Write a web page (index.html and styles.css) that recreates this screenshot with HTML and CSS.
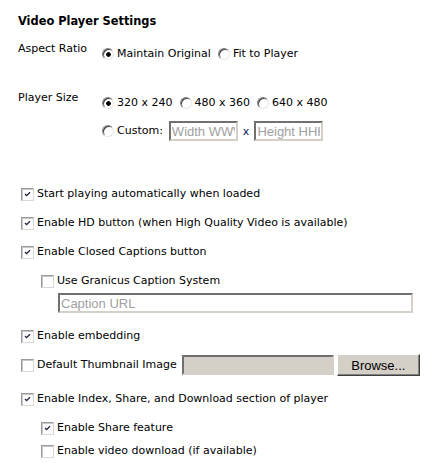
FILE: index.html
```html
<!DOCTYPE html>
<html>
<head>
<meta charset="utf-8">
<link rel="stylesheet" href="styles.css">
</head>
<body>
<div class="panel">
  <h2 class="title">Video Player Settings</h2>

  <div class="setting aspect">
    <div class="setting-label">Aspect Ratio</div>
    <div class="setting-options">
      <div class="opt-line">
        <label class="opt"><input type="radio" name="ar" checked><span>Maintain Original</span></label>
        <label class="opt"><input type="radio" name="ar"><span>Fit to Player</span></label>
      </div>
    </div>
  </div>

  <div class="setting size">
    <div class="setting-label">Player Size</div>
    <div class="setting-options">
      <div class="opt-line">
        <label class="opt"><input type="radio" name="ps" checked><span>320 x 240</span></label>
        <label class="opt"><input type="radio" name="ps"><span>480 x 360</span></label>
        <label class="opt"><input type="radio" name="ps"><span>640 x 480</span></label>
      </div>
      <div class="opt-line custom">
        <label class="opt"><input type="radio" name="ps"><span>Custom:</span></label>
        <input class="text-in small" type="text" placeholder="Width WWWW">
        <span class="times">x</span>
        <input class="text-in small" type="text" placeholder="Height HHHH">
      </div>
    </div>
  </div>

  <div class="checks">
    <label class="check"><input type="checkbox" checked><span>Start playing automatically when loaded</span></label>
    <label class="check gap"><input type="checkbox" checked><span>Enable HD button (when High Quality Video is available)</span></label>
    <label class="check gap"><input type="checkbox" checked><span>Enable Closed Captions button</span></label>
    <label class="check gap nested"><input type="checkbox"><span>Use Granicus Caption System</span></label>
    <input class="text-in caption" type="text" placeholder="Caption URL">
    <label class="check after-input"><input type="checkbox" checked><span>Enable embedding</span></label>
    <div class="check thumb-row">
      <label class="check-inline"><input type="checkbox"><span>Default Thumbnail Image</span></label>
      <input class="text-in file-box" type="text" disabled>
      <button class="browse" type="button">Browse...</button>
    </div>
    <label class="check after-thumb"><input type="checkbox" checked><span>Enable Index, Share, and Download section of player</span></label>
    <label class="check gap nested"><input type="checkbox" checked><span>Enable Share feature</span></label>
    <label class="check small-gap nested"><input type="checkbox"><span>Enable video download (if available)</span></label>
  </div>
</div>
</body>
</html>
```

FILE: styles.css
```css
html, body {
  margin: 0;
  padding: 0;
  background: #ffffff;
}

body {
  font-family: "DejaVu Sans", Verdana, sans-serif;
  font-size: 11px;
  color: #000;
}

.panel {
  padding: 13px 0 0 18px;
}

.title {
  margin: 0;
  font-size: 11.4px;
  font-weight: bold;
  line-height: 16px;
}

.setting {
  display: flex;
  align-items: flex-start;
}

.aspect {
  margin-top: 12px;
}

.size {
  margin-top: 28px;
}

.setting-label {
  width: 84px;
  line-height: 16px;
}

.setting-options {
  display: flex;
  flex-direction: column;
  padding-top: 5px;
}

.opt-line {
  display: flex;
  align-items: center;
  height: 16px;
}

.opt-line.custom {
  height: 20px;
  margin-top: 10px;
}

.opt {
  display: flex;
  align-items: center;
  margin-right: 7px;
}

.custom .opt {
  margin-right: 3px;
}

.opt span {
  line-height: 16px;
}

input[type="radio"] {
  -webkit-appearance: none;
  appearance: none;
  width: 12px;
  height: 12px;
  margin: 0 3px 0 0;
  border-radius: 50%;
  border: 1px solid;
  border-color: #808080 #e8e6e0 #e8e6e0 #808080;
  background: #fff;
  box-shadow: inset 1px 1px 0 #404040;
  flex: none;
}

input[type="radio"]:checked {
  background: radial-gradient(circle at 55% 55%, #000 0, #000 2px, #fff 2.6px);
}

.text-in {
  box-sizing: border-box;
  height: 20px;
  border: 2px solid;
  border-color: #707070 #d4d0c8 #d4d0c8 #707070;
  padding: 0 1px;
  font-family: "Liberation Sans", Arial, sans-serif;
  font-size: 13px;
  color: #000;
  background: #fff;
  outline: none;
}

.text-in::placeholder {
  color: #a0a0a0;
}

.small {
  width: 69px;
  margin-left: 3px;
}

.times {
  margin: 0 2px 0 5px;
  color: #0a1a5a;
}

.checks {
  display: flex;
  flex-direction: column;
  align-items: flex-start;
  margin-top: 45px;
  padding-left: 3px;
}

.check,
.check-inline {
  display: flex;
  align-items: center;
  line-height: 16px;
}

.gap {
  margin-top: 13px;
}

.small-gap {
  margin-top: 7px;
}

.nested {
  margin-left: 20px;
}

.after-input {
  margin-top: 15px;
}

.after-thumb {
  margin-top: 15px;
}

input[type="checkbox"] {
  -webkit-appearance: none;
  appearance: none;
  width: 13px;
  height: 13px;
  margin: 0 3px 0 0;
  border: 1px solid;
  border-color: #9a9a9a #d8d8d8 #d8d8d8 #9a9a9a;
  background: #fff;
  box-shadow: inset 1px 1px 0 #c8c8c8;
  flex: none;
}

input[type="checkbox"]:checked {
  background: #fff url("data:image/svg+xml;utf8,<svg xmlns='http://www.w3.org/2000/svg' width='11' height='11' viewBox='0 0 11 11'><path d='M3 5 L4.6 6.6 L8 3.2' fill='none' stroke='%23202040' stroke-width='1.3'/></svg>") no-repeat center;
}

.caption {
  width: 355px;
  margin: 4px 0 0 37px;
}

.thumb-row {
  margin-top: 10px;
  height: 22px;
}

.file-box {
  width: 152px;
  margin-left: 5px;
  background: #d4d0c8;
}

.browse {
  box-sizing: border-box;
  width: 83px;
  height: 22px;
  margin-left: 3px;
  padding: 0;
  font-family: "Liberation Sans", Arial, sans-serif;
  font-size: 13px;
  color: #000;
  background: #d4d0c8;
  border: 1px solid;
  border-color: #ffffff #404040 #404040 #ffffff;
  box-shadow: inset -1px -1px 0 #808080;
}
```
